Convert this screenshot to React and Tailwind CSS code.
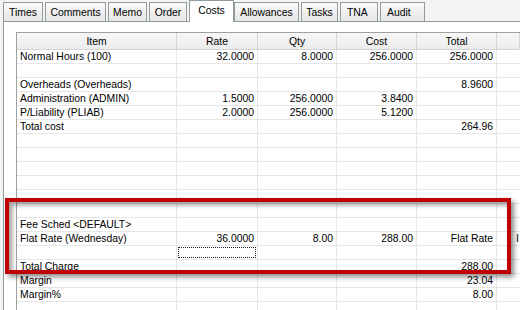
const tabs = [
    { label: 'Times', cls: 'ml-[3px] w-[40px]' },
    { label: 'Comments', cls: 'ml-[2px] w-[61px]' },
    { label: 'Memo', cls: 'ml-[2px] w-[39px]' },
    { label: 'Order', cls: 'ml-[2px] w-[38px]' },
    { label: 'Costs', cls: 'ml-[2px] w-[45px]', active: true },
    { label: 'Allowances', cls: 'w-[65px]' },
    { label: 'Tasks', cls: 'ml-[2px] w-[37px]' },
    { label: 'TNA', cls: 'ml-[2px] w-[38px] justify-start pl-[6px]' },
    { label: 'Audit', cls: 'ml-[2px] w-[45px] justify-start pl-[6px]' },
];

const columns = ['Item', 'Rate', 'Qty', 'Cost', 'Total', ''];

// item, rate, qty, cost, total, extra
const rows = [
    ['Normal Hours (100)', '32.0000', '8.0000', '256.0000', '256.0000'],
    [],
    ['Overheads (Overheads)', '', '', '', '8.9600'],
    ['Administration (ADMIN)', '1.5000', '256.0000', '3.8400', ''],
    ['P/Liability (PLIAB)', '2.0000', '256.0000', '5.1200', ''],
    ['Total cost', '', '', '', '264.96'],
    [], [], [], [], [], [],
    ['Fee Sched <DEFAULT>'],
    ['Flat Rate (Wednesday)', '36.0000', '8.00', '288.00', 'Flat Rate', 'I'],
    ['', 'focus'],
    ['Total Charge', '', '', '', '288.00'],
    ['Margin', '', '', '', '23.04'],
    ['Margin%', '', '', '', '8.00'],
    [],
];

const Cell = ({ value, col }) => {
    if (value === 'focus') {
        return (
            <div className="h-[14px] border-r border-b border-[#e6e6e6] p-px">
                <div className="h-full w-full border border-dotted border-[#222]" />
            </div>
        );
    }
    if (col === 5) {
        return (
            <div className="h-[14px] border-b border-[#e6e6e6] flex items-center pl-[19px] whitespace-nowrap overflow-hidden">
                {value}
            </div>
        );
    }
    return (
        <div className={`h-[14px] border-r border-b border-[#e6e6e6] flex items-center whitespace-nowrap overflow-hidden ${col === 0 ? 'pl-[3px]' : 'justify-end pr-[3px]'}`}>
            {value}
        </div>
    );
};

const App = () => {
    return (
        <div className="relative w-[520px] h-[310px] overflow-hidden bg-[#f4f4f4] text-black text-[10.4px] leading-[13px]" style={{ fontFamily: '"Liberation Sans", Arial, sans-serif' }}>
            {/* tab strip */}
            <div className="flex items-end h-[21px]">
                {tabs.map((t) =>
                    t.active ? (
                        <div key={t.label} className={`relative z-10 -mb-px h-[22px] flex justify-center pt-[3px] bg-white border border-b-0 border-[#919b9c] ${t.cls}`}>
                            {t.label}
                        </div>
                    ) : (
                        <div key={t.label} className={`h-[19px] flex items-center justify-center pt-px bg-gradient-to-b from-[#fafafa] to-[#e6e6e6] border border-b-0 border-[#919b9c] ${t.cls}`}>
                            {t.label}
                        </div>
                    )
                )}
            </div>

            {/* tab panel */}
            <div className="ml-[3px] h-[289px] border-t border-l border-[#919b9c] bg-white pl-[12px] pt-[10px]">
                <div className="grid grid-cols-[160px_81px_79px_80px_80px_1fr] border-t border-l border-[#a0a0a0]">
                    {columns.map((c, i) => (
                        <div key={i} className="h-[17px] flex items-center justify-center bg-gradient-to-b from-[#f7f7f7] to-[#ececec] border-r border-b border-[#d4d4d4]">
                            {c}
                        </div>
                    ))}
                    {rows.map((r, ri) =>
                        [0, 1, 2, 3, 4, 5].map((ci) => <Cell key={ri + '-' + ci} value={r[ci] || ''} col={ci} />)
                    )}
                </div>
            </div>

            {/* annotation box */}
            <div className="absolute left-[5px] top-[198px] w-[506px] h-[76px] border-4 border-[#c00000] shadow-[3px_3px_5px_rgba(0,0,0,0.45),inset_3px_3px_5px_rgba(0,0,0,0.4)]" />
        </div>
    );
};

export default App;
